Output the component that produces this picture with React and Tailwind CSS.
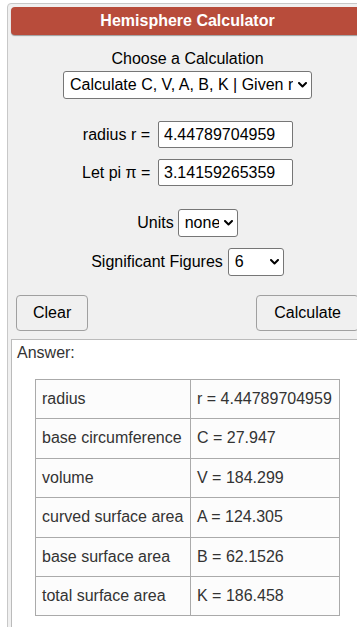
import React from 'react';

const Chevron = () => (
  <svg width="9" height="6" viewBox="0 0 9 6" className="pointer-events-none absolute top-1/2 -translate-y-1/2 right-[5px]">
    <path d="M1 1 L4.5 4.5 L8 1" fill="none" stroke="#000" strokeWidth="2" strokeLinecap="round" strokeLinejoin="round" />
  </svg>
);

function Select({ value, options, width }) {
  return (
    <div className="relative inline-block" style={{ width }}>
      <select
        defaultValue={value}
        className="appearance-none w-full h-[28px] pl-[6px] pr-[18px] bg-white border border-[#767676] rounded-[3px] text-[16px] leading-[18px] text-black outline-none"
      >
        {options.map((o) => (
          <option key={o}>{o}</option>
        ))}
      </select>
      <Chevron />
    </div>
  );
}

const rows = [
  ['radius', 'r = 4.44789704959'],
  ['base circumference', 'C = 27.947'],
  ['volume', 'V = 184.299'],
  ['curved surface area', 'A = 124.305'],
  ['base surface area', 'B = 62.1526'],
  ['total surface area', 'K = 186.458'],
];

export default function App() {
  return (
    <div className="w-[357px] h-[627px] overflow-hidden bg-white font-['Liberation_Sans',Arial,sans-serif] text-[16px] text-black">
      <div className="ml-[7px] mt-[3px] w-[361px] border border-[#c8c8c8] rounded-[4px] bg-[#f0f0f0] p-[3px]">
        {/* Header */}
        <div className="h-[28px] rounded-[4px] bg-[#b84c3b] shadow-[0_1px_1px_rgba(0,0,0,0.35)] flex items-center justify-center">
          <h1 className="font-bold text-white text-[16px] leading-[18px]">Hemisphere Calculator</h1>
        </div>

        {/* Calculation choice */}
        <div className="mt-[15px] text-center leading-[18px]">Choose a Calculation</div>
        <div className="mt-[3px] flex justify-center">
          <Select width="249px" value="Calculate C, V, A, B, K | Given r" options={['Calculate C, V, A, B, K | Given r']} />
        </div>

        {/* Inputs */}
        <div className="mt-[22px] flex justify-center items-center gap-[8px]">
          <label className="w-[68px] text-right whitespace-nowrap leading-[18px]">radius r =</label>
          <input defaultValue="4.44789704959" className="w-[135px] h-[27px] pl-[5px] bg-white border border-[#767676] rounded-[2px] text-[16px] outline-none" />
        </div>
        <div className="mt-[11px] flex justify-center items-center gap-[8px]">
          <label className="w-[68px] text-right whitespace-nowrap leading-[18px]">Let pi π =</label>
          <input defaultValue="3.14159265359" className="w-[135px] h-[27px] pl-[5px] bg-white border border-[#767676] rounded-[2px] text-[16px] outline-none" />
        </div>

        {/* Units / sig figs */}
        <div className="mt-[23px] flex justify-center items-center gap-[4px]">
          <span className="leading-[18px]">Units</span>
          <Select width="60px" value="none" options={['none']} />
        </div>
        <div className="mt-[11px] flex justify-center items-center gap-[5px]">
          <span className="leading-[18px]">Significant Figures</span>
          <Select width="56px" value="6" options={['6']} />
        </div>

        {/* Buttons */}
        <div className="mt-[19px] pl-[5px] pr-[5px] flex justify-between">
          <button className="h-[36px] px-[16px] bg-[#f0f0f0] border border-[#a0a0a0] rounded-[4px] text-[16px] leading-[18px]">Clear</button>
          <button className="h-[36px] px-[17px] bg-[#f0f0f0] border border-[#a0a0a0] rounded-[4px] text-[16px] leading-[18px]">Calculate</button>
        </div>

        {/* Answer */}
        <div className="mt-[8px] border border-[#bbbbbb] bg-white pt-[4px] px-[5px] pb-[20px] text-[#333]">
          <div className="leading-[18px]">Answer:</div>
          <table className="mt-[17px] ml-[18px] border-collapse bg-[#fcfcfc]">
            <tbody>
              {rows.map(([k, v]) => (
                <tr key={k}>
                  <td className="w-[155px] border border-[#aaaaaa] px-[6px] py-[10px] leading-[18.4px] whitespace-nowrap">{k}</td>
                  <td className="w-[149px] border border-[#aaaaaa] px-[6px] py-[10px] leading-[18.4px] whitespace-nowrap">{v}</td>
                </tr>
              ))}
            </tbody>
          </table>
        </div>
      </div>
    </div>
  );
}
